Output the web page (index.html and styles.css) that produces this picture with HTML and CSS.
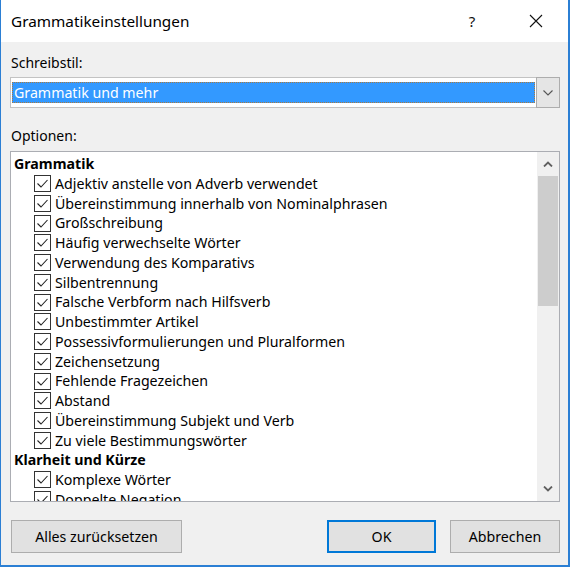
FILE: index.html
```html
<!DOCTYPE html>
<html lang="de">
<head>
<meta charset="utf-8">
<title>Grammatikeinstellungen</title>
<link rel="stylesheet" href="styles.css">
</head>
<body>
<div class="window">
  <div class="titlebar">
    <span class="title">Grammatikeinstellungen</span>
    <span class="help">?</span>
    <span class="close"><svg width="14" height="14" viewBox="0 0 14 14"><path d="M1 1 L13 13 M13 1 L1 13" stroke="#111" stroke-width="1.1" fill="none"/></svg></span>
  </div>
  <div class="content">
    <div class="label label-first">Schreibstil:</div>
    <div class="combo">
      <div class="combo-field"><div class="combo-sel">Grammatik und mehr</div></div>
      <div class="combo-btn"><svg width="10" height="6" viewBox="0 0 10 6"><path d="M0.5 0.5 L5 5 L9.5 0.5" stroke="#555" stroke-width="1.1" fill="none"/></svg></div>
    </div>
    <div class="label label-second">Optionen:</div>
    <div class="listbox">
      <div class="list">
        <div class="cat">Grammatik</div>
        <div class="item"><span class="cb"></span>Adjektiv anstelle von Adverb verwendet</div>
        <div class="item"><span class="cb"></span>Übereinstimmung innerhalb von Nominalphrasen</div>
        <div class="item"><span class="cb"></span>Großschreibung</div>
        <div class="item"><span class="cb"></span>Häufig verwechselte Wörter</div>
        <div class="item"><span class="cb"></span>Verwendung des Komparativs</div>
        <div class="item"><span class="cb"></span>Silbentrennung</div>
        <div class="item"><span class="cb"></span>Falsche Verbform nach Hilfsverb</div>
        <div class="item"><span class="cb"></span>Unbestimmter Artikel</div>
        <div class="item"><span class="cb"></span>Possessivformulierungen und Pluralformen</div>
        <div class="item"><span class="cb"></span>Zeichensetzung</div>
        <div class="item"><span class="cb"></span>Fehlende Fragezeichen</div>
        <div class="item"><span class="cb"></span>Abstand</div>
        <div class="item"><span class="cb"></span>Übereinstimmung Subjekt und Verb</div>
        <div class="item"><span class="cb"></span>Zu viele Bestimmungswörter</div>
        <div class="cat">Klarheit und Kürze</div>
        <div class="item"><span class="cb"></span>Komplexe Wörter</div>
        <div class="item"><span class="cb"></span>Doppelte Negation</div>
        <div class="item"><span class="cb"></span>Passiv</div>
      </div>
      <div class="scrollbar">
        <div class="sb-btn"><svg width="10" height="6" viewBox="0 0 10 6"><path d="M1 5.5 L5 1.5 L9 5.5" stroke="#606060" stroke-width="1.8" fill="none"/></svg></div>
        <div class="sb-track"><div class="sb-thumb"></div></div>
        <div class="sb-btn"><svg width="10" height="6" viewBox="0 0 10 6"><path d="M1 0.5 L5 4.5 L9 0.5" stroke="#606060" stroke-width="1.8" fill="none"/></svg></div>
      </div>
    </div>
    <div class="buttons">
      <button class="btn btn-reset">Alles zurücksetzen</button>
      <span class="spacer"></span>
      <button class="btn btn-ok">OK</button>
      <button class="btn btn-cancel">Abbrechen</button>
    </div>
  </div>
</div>
</body>
</html>
```

FILE: styles.css
```css
* { box-sizing: border-box; }
html, body { margin: 0; padding: 0; }
body {
  width: 570px;
  height: 567px;
  background: #ffffff;
  font-family: "Segoe UI", "Noto Sans", "Open Sans", sans-serif;
  color: #000;
  overflow: hidden;
}
.window {
  width: 570px;
  height: 567px;
  background: #f0f0f0;
  border-left: 1px solid #2b7fd4;
  border-right: 2px solid #2b7fd4;
  border-bottom: 2px solid #2b7fd4;
  display: flex;
  flex-direction: column;
}
.titlebar {
  height: 42px;
  background: #ffffff;
  display: flex;
  align-items: center;
  padding-left: 10px;
  flex: none;
}
.title {
  font-size: 15.3px;
  flex: 1;
  padding-bottom: 1px;
}
.help {
  font-size: 15px;
  width: 16px;
  text-align: center;
  margin-right: 49px;
  color: #111;
}
.close {
  display: flex;
  margin-right: 25px;
}
.content {
  padding: 0 8px 0 9px;
  display: flex;
  flex-direction: column;
  flex: 1;
}
.label {
  font-size: 14px;
  line-height: 20px;
  height: 20px;
  padding-left: 1px;
}
.label-first { margin-top: 11px; margin-bottom: 4px; }
.label-second { margin-top: 18px; margin-bottom: 5px; }
.combo {
  height: 31px;
  display: flex;
  background: #fff;
  border: 1px solid #c3c3c3;
  border-right: none;
}
.combo-field {
  flex: 1;
  padding: 4px 1px 4px 1px;
}
.combo-sel {
  height: 21px;
  background: #3399ff;
  border: 1px dotted #a97a3f;
  color: #fff;
  font-size: 14.2px;
  line-height: 19px;
  padding-left: 1px;
}
.combo-btn {
  width: 24px;
  background: #e5e5e5;
  border: 1px solid #adadad;
  margin-top: -1px;
  margin-bottom: -1px;
  display: flex;
  align-items: center;
  justify-content: center;
}
.listbox {
  height: 351px;
  background: #fff;
  border: 1px solid #abadb3;
  display: flex;
  overflow: hidden;
}
.list {
  flex: 1;
  overflow: hidden;
  font-size: 14.2px;
  padding-top: 2px;
}
.cat {
  font-weight: bold;
  height: 19.75px;
  line-height: 19.75px;
  padding-left: 3px;
}
.item {
  height: 19.75px;
  line-height: 19.75px;
  display: flex;
  align-items: center;
  padding-left: 23px;
}
.cb {
  width: 17px;
  height: 17px;
  border: 1px solid #333;
  margin-right: 4px;
  flex: none;
  background: #fff url("data:image/svg+xml;utf8,<svg xmlns='http://www.w3.org/2000/svg' width='15' height='15' viewBox='0 0 15 15'><path d='M2.5 7.5 L6 11 L12.5 4' stroke='%23222' stroke-width='1.1' fill='none'/></svg>") no-repeat center;
}
.scrollbar {
  width: 22px;
  background: #f0f0f0;
  display: flex;
  flex-direction: column;
  flex: none;
}
.sb-btn {
  height: 24px;
  display: flex;
  align-items: center;
  justify-content: center;
  flex: none;
}
.sb-track { flex: 1; }
.sb-thumb {
  height: 130px;
  margin: 0 1px;
  background: #cdcdcd;
}
.buttons {
  display: flex;
  margin-top: 18px;
  gap: 0;
}
.spacer { flex: 1; }
.btn {
  height: 33px;
  background: #e1e1e1;
  border: 1px solid #adadad;
  font-family: inherit;
  font-size: 14.2px;
  color: #000;
  padding: 0;
  margin: 0;
}
.btn-reset { width: 171px; margin-left: 1px; }
.btn-ok { width: 109px; border: 2px solid #0078d7; margin-right: 14px; }
.btn-cancel { width: 110px; }
```
